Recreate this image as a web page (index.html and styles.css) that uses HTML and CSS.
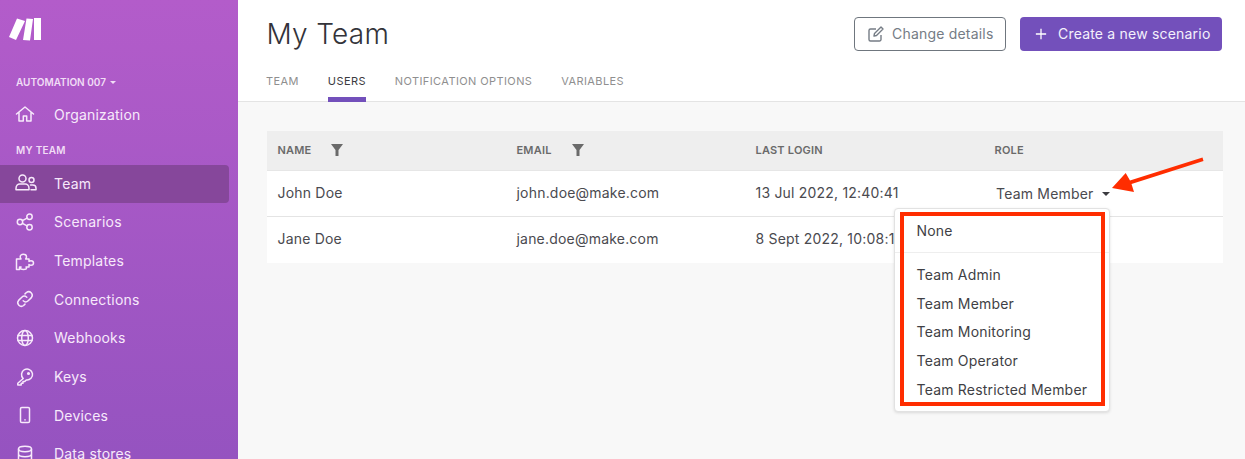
FILE: index.html
```html
<!DOCTYPE html>
<html lang="en">
<head>
<meta charset="utf-8">
<title>My Team</title>
<link rel="stylesheet" href="styles.css">
</head>
<body>
<div class="app">
  <aside class="sidebar">
    <div class="logo">
      <svg width="33" height="23" viewBox="0 0 33 23"><path fill="#fff" d="M8 .6 16 3 7 22 0 19ZM17.500 .5 24 1 21 22.500 14 22ZM25 0H32V22H25Z"/></svg>
    </div>
    <div class="org-label">AUTOMATION 007 <span class="org-caret"></span></div>
    <a class="nav-item">
      <svg class="nav-icon" viewBox="0 0 20 20"><path d="M1.500 10 10 3l8.500 7M4 8.500V17h4.300v-5h3.400v5H16V8.500"/></svg>
      <span>Organization</span>
    </a>
    <div class="section-label">MY TEAM</div>
    <a class="nav-item active">
      <svg class="nav-icon wide" viewBox="0 0 22 20"><circle cx="7.500" cy="5.500" r="3.500"/><path d="M1 15.500c0-3 2-4.500 3.800-4.500h5.400c1.800 0 3.800 1.500 3.800 4.500v1.300H1Z"/><circle cx="16.500" cy="7" r="2.500"/><path d="M15.500 12h2.300c1.800 0 3.200 1.300 3.200 3.200v1.600h-5"/></svg>
      <span>Team</span>
    </a>
    <a class="nav-item">
      <svg class="nav-icon" viewBox="0 0 20 20"><circle cx="5" cy="10" r="2.700"/><circle cx="14.500" cy="4.800" r="2.700"/><circle cx="14.500" cy="15.200" r="2.700"/><path d="M7.400 8.700l4.700-2.600M7.400 11.300l4.700 2.600"/></svg>
      <span>Scenarios</span>
    </a>
    <a class="nav-item">
      <svg class="nav-icon" viewBox="0 0 20 20"><path d="M1.500 8H6C5.500 7.200 5.200 6.700 5.200 5.800 5.200 4.300 6.500 3.300 8.300 3.300S11.500 4.300 11.500 5.800C11.500 6.700 11.200 7.200 10.700 8H14V10.500C14.800 9.900 15.300 9.700 16 9.700 17.500 9.700 18.500 10.700 18.500 12S17.500 14.300 16 14.300C15.300 14.300 14.800 14.100 14 13.500V16H11C11.400 16.700 11.500 17 11.500 17.300 11.500 18.200 10.500 18.500 8.500 18.500S5.500 18.200 5.500 17.300C5.500 17 5.700 16.700 6 16H4.500V18.500H1.500Z"/></svg>
      <span>Templates</span>
    </a>
    <a class="nav-item">
      <svg class="nav-icon" viewBox="0 0 20 20"><path d="M8.200 11.800a3.600 3.600 0 0 0 5 0l3.200-3.200a3.600 3.600 0 0 0-5-5.100l-1.400 1.400"/><path d="M11.800 8.200a3.600 3.600 0 0 0-5 0l-3.200 3.200a3.600 3.600 0 0 0 5 5.100l1.400-1.400"/></svg>
      <span>Connections</span>
    </a>
    <a class="nav-item">
      <svg class="nav-icon" viewBox="0 0 20 20"><circle cx="10" cy="10" r="7.500"/><ellipse cx="10" cy="10" rx="3.300" ry="7.500"/><path d="M3 7.500h14M3 12.500h14"/></svg>
      <span>Webhooks</span>
    </a>
    <a class="nav-item">
      <svg class="nav-icon" viewBox="0 0 20 20"><path d="M8.200 11.500 2.800 16.200V18h3.400v-1.800H8v-1.800h1.800l1.500-1.400a5.500 5.500 0 1 0-3.100-1.500Z"/><circle cx="13.500" cy="6.500" r=".8"/></svg>
      <span>Keys</span>
    </a>
    <a class="nav-item">
      <svg class="nav-icon" viewBox="0 0 20 20"><rect x="5.500" y="2.500" width="9" height="15" rx="1.300"/><path d="M10 14.700v.3"/></svg>
      <span>Devices</span>
    </a>
    <a class="nav-item">
      <svg class="nav-icon" viewBox="0 0 20 20"><ellipse cx="10" cy="5" rx="6.500" ry="2.700"/><path d="M3.500 5v10c0 1.500 2.900 2.700 6.500 2.700s6.500-1.200 6.500-2.700V5M3.500 10c0 1.500 2.900 2.700 6.500 2.700s6.500-1.200 6.500-2.700"/></svg>
      <span>Data stores</span>
    </a>
  </aside>
  <main class="main">
    <header class="page-header">
      <div class="title-row">
        <h1 class="title">My Team</h1>
        <div class="actions">
          <button class="btn btn-outline">
            <svg class="btn-icon" viewBox="0 0 18 18"><path d="M14 10v4.500a1.500 1.500 0 0 1-1.500 1.500h-9A1.500 1.500 0 0 1 2 14.500v-9A1.500 1.500 0 0 1 3.500 4H9"/><path d="M7.500 8.500 14 2l2 2-6.500 6.500-2.500.5Z"/></svg>
            Change details
          </button>
          <button class="btn btn-primary">
            <svg class="btn-icon plus" viewBox="0 0 14 14"><path d="M7 1v12M1 7h12"/></svg>
            Create a new scenario
          </button>
        </div>
      </div>
      <nav class="tabs">
        <a class="tab">TEAM</a>
        <a class="tab current">USERS</a>
        <a class="tab">NOTIFICATION OPTIONS</a>
        <a class="tab">VARIABLES</a>
      </nav>
    </header>
    <section class="content">
      <div class="table">
        <div class="row head">
          <div class="cell">NAME <svg class="filter" viewBox="0 0 12 12"><path d="M0 0h12L7.500 6v6h-3V6Z"/></svg></div>
          <div class="cell">EMAIL <svg class="filter" viewBox="0 0 12 12"><path d="M0 0h12L7.500 6v6h-3V6Z"/></svg></div>
          <div class="cell">LAST LOGIN</div>
          <div class="cell">ROLE</div>
        </div>
        <div class="row">
          <div class="cell">John Doe</div>
          <div class="cell">john.doe@make.com</div>
          <div class="cell">13 Jul 2022, 12:40:41</div>
          <div class="cell role">Team Member <span class="caret"></span></div>
        </div>
        <div class="row">
          <div class="cell">Jane Doe</div>
          <div class="cell">jane.doe@make.com</div>
          <div class="cell">8 Sept 2022, 10:08:12</div>
          <div class="cell"></div>
        </div>
      </div>
    </section>
    <div class="menu">
      <div class="menu-item">None</div>
      <div class="menu-divider"></div>
      <div class="menu-item">Team Admin</div>
      <div class="menu-item">Team Member</div>
      <div class="menu-item">Team Monitoring</div>
      <div class="menu-item">Team Operator</div>
      <div class="menu-item">Team Restricted Member</div>
    </div>
    <div class="highlight"></div>
    <svg class="arrow" width="96" height="40" viewBox="0 0 96 40"><path fill="#FF2D00" d="M2 33 15.700 18 20 25.500 92.500 2.500 93.500 6 21.500 29 24 37Z"/></svg>
  </main>
</div>
</body>
</html>
```
FILE: styles.css
```css
* { box-sizing: border-box; }
html, body { margin: 0; height: 459px; overflow: hidden; }
body { font-family: Inter, "Liberation Sans", sans-serif; color: #3b3b40; background: #f8f8f8; }
.app { display: flex; height: 459px; }

.sidebar {
  width: 238px;
  flex: none;
  height: 459px;
  overflow: hidden;
  background: linear-gradient(180deg, #b35cca 0%, #9553c0 100%);
  color: #f7e9fb;
  padding-right: 9px;
}
.logo { height: 76px; padding: 18px 0 0 9px; }
.logo svg { display: block; }
.org-label, .section-label {
  font-size: 10px;
  font-weight: 600;
  padding-left: 16px;
  color: #f1ddf6;
}
.org-label { height: 19px; line-height: 12px; }
.org-caret {
  display: inline-block;
  border: 3px solid transparent;
  border-top-color: #f1ddf6;
  border-bottom: 0;
  vertical-align: 2px;
  margin-left: 1px;
}
.section-label { height: 31px; line-height: 32px; letter-spacing: .25px; }
.nav-item {
  display: flex;
  align-items: center;
  height: 38.67px;
  font-size: 14px;
  letter-spacing: .2px;
  border-radius: 0 4px 4px 0;
}
.section-label ~ .nav-item { padding-bottom: 1.500px; }
.nav-item span { margin-left: 19px; }
.nav-item.active { background: #86479b; }
.nav-icon {
  width: 20px;
  height: 20px;
  margin-left: 15px;
  flex: none;
  fill: none;
  stroke: #f7e9fb;
  stroke-width: 1.500;
  stroke-linejoin: round;
  stroke-linecap: round;
}
.nav-icon.wide { width: 22px; margin-left: 15px; margin-right: -2px; }

.main { flex: 1; min-width: 0; position: relative; }
.page-header { height: 102px; background: #fff; border-bottom: 1px solid #e4e4e4; padding: 0 23px 0 29px; display: flex; flex-direction: column; }
.title-row { height: 68px; display: flex; justify-content: space-between; padding-top: 17px; }
.title { margin: 0 0 0 -.5px; font-size: 28px; font-weight: 300; line-height: 34px; color: #33333a; letter-spacing: .3px; }
.actions { display: flex; gap: 14px; }
.btn {
  height: 34px;
  border-radius: 4px;
  font-family: inherit;
  font-size: 14px;
  letter-spacing: .2px;
  display: flex;
  align-items: center;
  padding: 0 0 1px;
}
.btn-outline { width: 152px; background: #fff; color: #757c85; border: 1px solid #6f767e; padding-left: 12px; gap: 7px; }
.btn-primary { width: 202px; background: #7350bb; color: #f4f0fb; border: 0; padding-left: 15px; gap: 11px; }
.btn-icon { width: 18px; height: 18px; fill: none; stroke: #757c85; stroke-width: 1.400; stroke-linejoin: round; flex: none; }
.btn-icon.plus { width: 12px; height: 12px; stroke: #fff; stroke-width: 1.500; }
.tabs { display: flex; gap: 29px; height: 33px; margin-left: -1px; }
.tab { font-size: 11px; letter-spacing: .4px; color: #8f8f8f; line-height: 26px; height: 34px; }
.tab.current { color: #3b3b40; border-bottom: 5px solid #7350bb; }

.content { padding: 29px 22px 0 29px; }
.table { background: #fff; }
.row { display: grid; grid-template-columns: repeat(4, 239px); align-items: center; height: 46px; padding-bottom: 2px; font-size: 14px; color: #4a4a4f; letter-spacing: .2px; border-bottom: 1px solid #e4e4e4; }
.row:last-child { border-bottom: 0; padding-bottom: 3px; }
.row.head { height: 40px; padding-bottom: 1px; background: #eee; font-size: 11px; font-weight: 600; color: #6a6a6a; letter-spacing: .2px; border-bottom: 1px solid #e6e6e6; }
.cell { padding-left: 10.500px; display: flex; align-items: center; }
.filter { width: 12px; height: 12px; fill: #6a6a6a; margin-left: 20px; margin-top: -1px; }
.role { padding-left: 12px; margin-top: 2px; }
.caret { border: 4px solid transparent; border-top-color: #3b3b40; border-bottom: 0; margin-left: 8px; margin-top: 1px; }

.menu {
  position: absolute;
  left: 656px;
  top: 208px;
  width: 216px;
  height: 204px;
  background: #fff;
  border: 1px solid #e2e2e2;
  border-radius: 4px;
  box-shadow: 0 1px 3px rgba(0,0,0,.12);
  padding-top: 8px;
  font-size: 14px;
  color: #3f3f45;
  letter-spacing: .2px;
}
.menu-item { height: 28.750px; line-height: 28.750px; padding-left: 21.500px; }
.menu-divider { height: 1px; background: #eee; margin: 6px 0 8px; }
.highlight { position: absolute; left: 662px; top: 212px; width: 205px; height: 194px; border: 4px solid #ff2d00; }
.arrow { position: absolute; left: 872px; top: 155px; }
```
